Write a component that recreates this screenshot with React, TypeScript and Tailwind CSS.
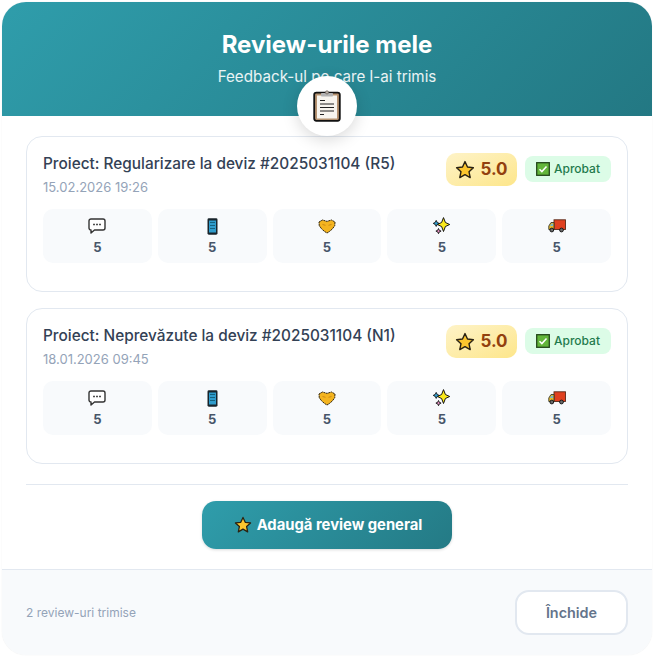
import React from "react";

const ClipboardIcon = () => (
  <svg width="28" height="32" viewBox="0 0 28 32">
    <rect x="1.2" y="2.6" width="25.6" height="28.2" rx="2.2" fill="#b59270" stroke="#111" strokeWidth="1.8" />
    <rect x="4" y="5.5" width="20" height="23" fill="#f8f5ef" />
    <rect x="8" y="3" width="12" height="3.6" rx="0.8" fill="#b3b3b3" />
    <circle cx="14" cy="2.4" r="1.6" fill="#b8b0a8" stroke="#6b6259" strokeWidth="0.7" />
    <path d="M7 10.5h5M7 14h14M7 17.5h14M7 21h14M7 24.5h4" stroke="#222" strokeWidth="1.2" />
  </svg>
);

const StarIcon = ({ size = 20 }: { size?: number }) => (
  <svg width={size} height={size} viewBox="0 0 20 20">
    <path
      d="M10 1.6l2.5 5.4 5.9.7-4.4 4 1.2 5.9-5.2-3-5.2 3 1.2-5.9-4.4-4 5.9-.7z"
      fill="#fcc62e"
      stroke="#2a2212"
      strokeWidth="1.4"
      strokeLinejoin="round"
    />
  </svg>
);

const CheckIcon = () => (
  <svg width="14" height="14" viewBox="0 0 14 14">
    <rect x="0.7" y="0.7" width="12.6" height="12.6" fill="#62b53a" stroke="#23471a" strokeWidth="1.3" />
    <path d="M3.5 7.2l2.4 2.4 4.6-5" fill="none" stroke="#fff" strokeWidth="1.5" />
  </svg>
);

const SpeechIcon = () => (
  <svg width="18" height="16" viewBox="0 0 18 16">
    <path
      d="M3 1h12a2 2 0 012 2v7a2 2 0 01-2 2H6.5L3 15v-3a2 2 0 01-2-2V3a2 2 0 012-2z"
      fill="#fff"
      stroke="#333"
      strokeWidth="1.4"
      strokeLinejoin="round"
    />
    <path d="M5.2 6.5h1.6M8.2 6.5h1.6M11.2 6.5h1.6" stroke="#222" strokeWidth="1.7" />
  </svg>
);

const PhoneIcon = () => (
  <svg width="11" height="17" viewBox="0 0 11 17">
    <rect x="0.5" y="0.3" width="10" height="16.4" rx="1.4" fill="#18242b" />
    <rect x="2" y="2.5" width="7" height="12" fill="#2f9ccc" />
    <path d="M3 4.5h5M3 7.5h5M3 10.5h5" stroke="#14627f" strokeWidth="1.1" />
  </svg>
);

const HandshakeIcon = () => (
  <svg width="18" height="15" viewBox="0 0 18 15">
    <path
      d="M1 3l3.5-2 4.5 1.4L13.5 1 17 3l-.3 3.8-2.4 3.2-3 2.6L9 14l-2.3-1.4-3-2.6L1.3 6.8z"
      fill="#f4b41f"
      stroke="#33260d"
      strokeWidth="1"
      strokeLinejoin="round"
      strokeDasharray="2 0.5"
    />
    <path d="M4.5 5.5l3 .8M10.5 6.3l3-.8" stroke="#cf8a12" strokeWidth="1" />
  </svg>
);

const SparklesIcon = () => (
  <svg width="17" height="18" viewBox="0 0 17 18">
    <path d="M10.5 0.6l1.9 4.9 4.3 2-4.3 2-1.9 5-1.9-5-4.3-2 4.3-2z" fill="#fbe91c" stroke="#141414" strokeWidth="1" strokeLinejoin="round" />
    <path d="M3.2 3.4l1 2 2 1-2 1-1 2-1-2-2-1 2-1z" fill="#2f9ccc" stroke="#141414" strokeWidth="0.9" strokeLinejoin="round" />
    <path d="M5.5 11.5l.8 1.8 1.8.8-1.8.8-.8 1.8-.8-1.8-1.8-.8 1.8-.8z" fill="#e58fc0" stroke="#141414" strokeWidth="0.9" strokeLinejoin="round" />
  </svg>
);

const TruckIcon = () => (
  <svg width="18" height="14" viewBox="0 0 18 14">
    <rect x="6" y="0.8" width="11.5" height="9.7" fill="#e0401f" stroke="#5a2a1a" strokeWidth="0.9" />
    <path d="M6 3.5H3L.8 7v3.5H6z" fill="#e8b92a" stroke="#3a3a2a" strokeWidth="0.9" strokeLinejoin="round" />
    <path d="M5 4.7H3.4L2 7h3z" fill="#6fb8d2" />
    <circle cx="3.8" cy="11" r="1.9" fill="#6b6b6b" stroke="#111" strokeWidth="0.9" />
    <circle cx="13.5" cy="11" r="1.9" fill="#6b6b6b" stroke="#111" strokeWidth="0.9" />
  </svg>
);

const metricIcons = [SpeechIcon, PhoneIcon, HandshakeIcon, SparklesIcon, TruckIcon];

const ReviewCard = ({ title, date }: { title: string; date: string }) => (
  <div className="h-[156px] rounded-2xl border border-[#e2e8f0] bg-white px-4 pt-4">
    <div className="flex h-[56px] items-start justify-between">
      <div className="pt-[1px]">
        <p className="text-[15.36px] leading-[20px] font-medium text-[#334155]">{title}</p>
        <p className="mt-[4px] text-[13px] leading-[18px] text-[#94a3b8]">{date}</p>
      </div>
      <div className="flex items-start gap-2">
        <div className="flex h-[33px] w-[71px] items-center justify-center gap-[5px] rounded-[10px] bg-gradient-to-br from-[#fef3c7] to-[#fde68a] text-[17px] font-bold text-[#92400e]">
          <StarIcon />
          <span>5.0</span>
        </div>
        <div className="mt-[3px] flex h-[26px] w-[86px] items-center justify-center gap-[4px] rounded-lg bg-[#dcfce7] text-[12px] font-medium text-[#1f7a4d]">
          <CheckIcon />
          <span>Aprobat</span>
        </div>
      </div>
    </div>
    <div className="grid grid-cols-5 gap-[6px]">
      {metricIcons.map((Icon, i) => (
        <div key={i} className="flex h-[54px] flex-col items-center rounded-[10px] bg-[#f8fafc]">
          <div className="mt-[8px] flex h-[18px] items-center justify-center">
            <Icon />
          </div>
          <span className="mt-[3px] text-[13px] leading-[18px] font-bold text-[#475569]">5</span>
        </div>
      ))}
    </div>
  </div>
);

export default function App() {
  return (
    <div className="h-[657px] w-[654px] bg-white p-[2px] font-['Inter',sans-serif]">
      <div className="relative flex h-[653px] w-[650px] flex-col overflow-hidden rounded-3xl bg-white shadow-[0_0_1px_rgba(0,0,0,0.12)]">
        <div className="h-[114px] bg-[linear-gradient(135deg,#2f9dab,#237883)] pt-[26px] text-center text-white">
          <h1 className="text-2xl leading-[34px] font-bold">Review-urile mele</h1>
          <p className="mt-[4px] text-[15.2px] leading-[22px] text-white/90">Feedback-ul pe care l-ai trimis</p>
        </div>

        <div className="absolute top-[74px] left-[295px] flex h-[60px] w-[60px] items-center justify-center rounded-full bg-white shadow-[0_4px_16px_rgba(0,0,0,0.15)]">
          <ClipboardIcon />
        </div>

        <div className="flex flex-col gap-4 px-6 pt-5">
          <ReviewCard title="Proiect: Regularizare la deviz #2025031104 (R5)" date="15.02.2026 19:26" />
          <ReviewCard title="Proiect: Neprevăzute la deviz #2025031104 (N1)" date="18.01.2026 09:45" />
        </div>

        <div className="mx-6 mt-5 border-t border-[#e2e8f0] pt-4">
          <button className="mx-auto flex h-12 w-[250px] items-center justify-center gap-[5px] rounded-[14px] bg-[linear-gradient(135deg,#2f9dab,#247a85)] pl-[2px] text-[14.8px] font-bold text-white shadow-[0_1px_3px_rgba(0,0,0,0.15)]">
            <StarIcon size={18} />
            <span>Adaugă review general</span>
          </button>
        </div>

        <div className="mt-5 flex flex-1 items-center justify-between border-t border-[#e2e8f0] bg-[#f8fafc] px-6">
          <span className="text-xs text-[#94a3b8]">2 review-uri trimise</span>
          <button className="h-[45px] w-[113px] rounded-[14px] border-2 border-[#e2e8f0] bg-white text-[14.4px] font-semibold text-[#64748b]">
            Închide
          </button>
        </div>
      </div>
    </div>
  );
}
